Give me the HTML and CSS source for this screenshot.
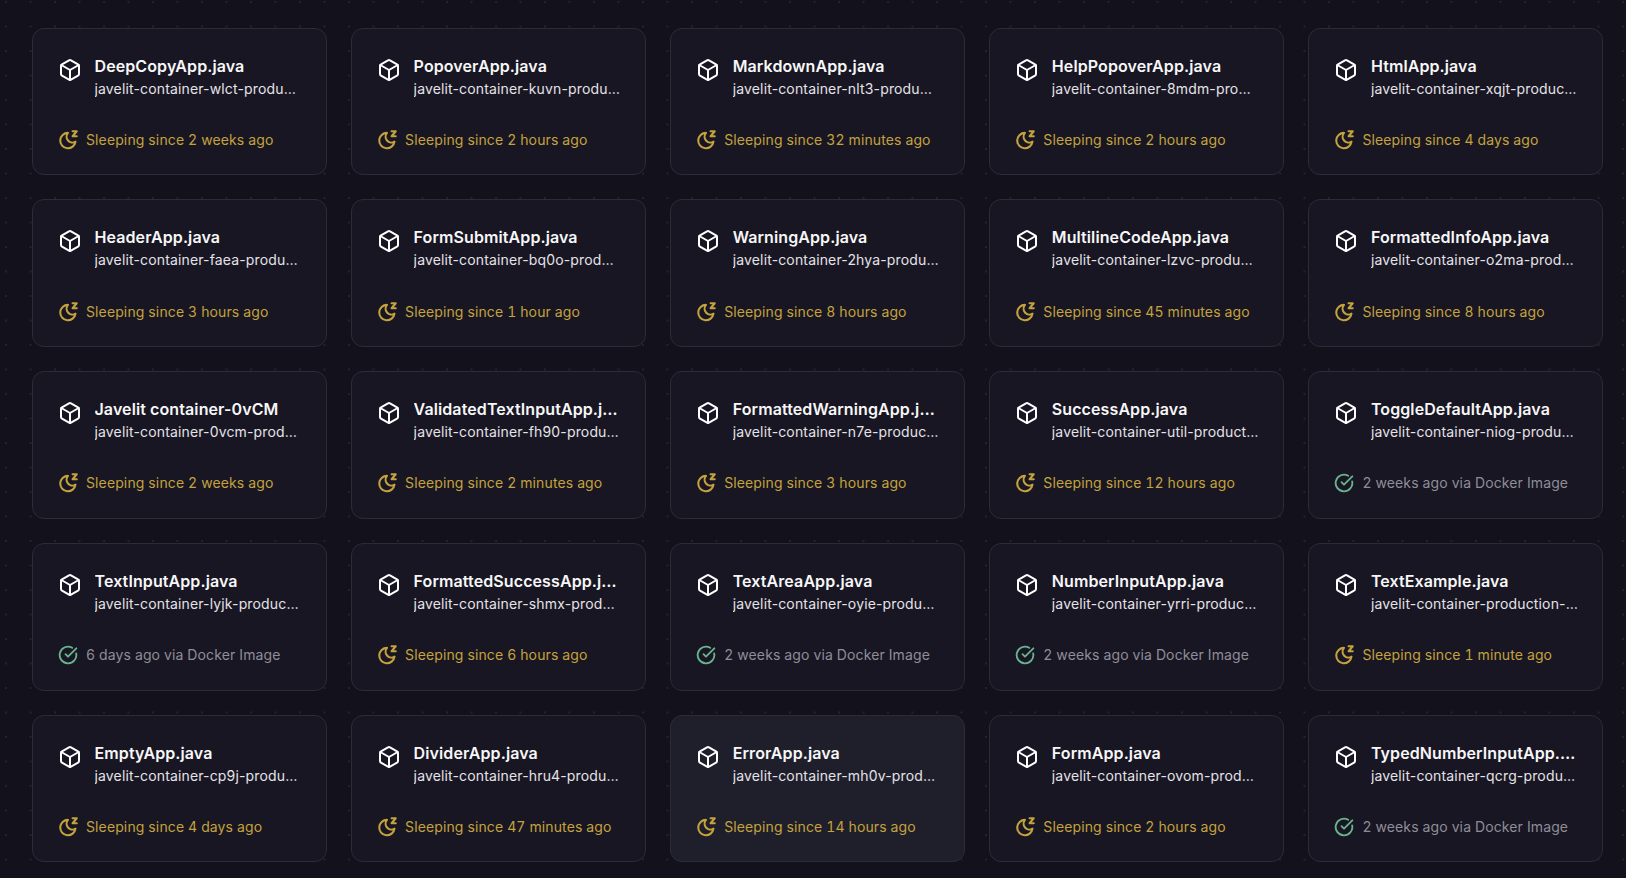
FILE: index.html
```html
<html>
  <head>
    <title>Javelit containers</title>
    <meta name="viewport" content="width=device-width, initial-scale=1.0" />
    <link rel="stylesheet" href="styles.css">
  </head>
  <body>
    <svg class="defs" width="0" height="0">
      <symbol id="box" viewBox="0 0 24 24">
        <path d="M21 8a2 2 0 0 0-1-1.73l-7-4a2 2 0 0 0-2 0l-7 4A2 2 0 0 0 3 8v8a2 2 0 0 0 1 1.73l7 4a2 2 0 0 0 2 0l7-4A2 2 0 0 0 21 16Z" />
        <path d="m3.3 7 8.7 5 8.7-5" />
        <path d="M12 22V12" />
      </symbol>
      <symbol id="moon" viewBox="0 0 24 24">
        <path d="M12 3.5A9.2 9.2 0 1 0 21 14A7 7 0 0 1 12 3.5Z" />
        <path d="M17.5 1.5h5l-5 6h5" />
      </symbol>
      <symbol id="check" viewBox="0 0 24 24">
        <path d="M21.8 10A10 10 0 1 1 17 3.34" />
        <path d="m9 11 3 3L22 4" />
      </symbol>
    </svg>
    <div class="grid">
      <div class="card">
        <div class="head"><svg class="icon-box"><use href="#box" /></svg><div class="names"><div class="name">DeepCopyApp.java</div><div class="host">javelit-container-wlct-production.up.railway.app</div></div></div>
        <div class="status sleeping"><svg class="icon-status"><use href="#moon" /></svg><span>Sleeping since 2 weeks ago</span></div>
      </div>
      <div class="card">
        <div class="head"><svg class="icon-box"><use href="#box" /></svg><div class="names"><div class="name">PopoverApp.java</div><div class="host">javelit-container-kuvn-production.up.railway.app</div></div></div>
        <div class="status sleeping"><svg class="icon-status"><use href="#moon" /></svg><span>Sleeping since 2 hours ago</span></div>
      </div>
      <div class="card">
        <div class="head"><svg class="icon-box"><use href="#box" /></svg><div class="names"><div class="name">MarkdownApp.java</div><div class="host">javelit-container-nlt3-production.up.railway.app</div></div></div>
        <div class="status sleeping"><svg class="icon-status"><use href="#moon" /></svg><span>Sleeping since 32 minutes ago</span></div>
      </div>
      <div class="card">
        <div class="head"><svg class="icon-box"><use href="#box" /></svg><div class="names"><div class="name">HelpPopoverApp.java</div><div class="host">javelit-container-8mdm-production.up.railway.app</div></div></div>
        <div class="status sleeping"><svg class="icon-status"><use href="#moon" /></svg><span>Sleeping since 2 hours ago</span></div>
      </div>
      <div class="card">
        <div class="head"><svg class="icon-box"><use href="#box" /></svg><div class="names"><div class="name">HtmlApp.java</div><div class="host">javelit-container-xqjt-production.up.railway.app</div></div></div>
        <div class="status sleeping"><svg class="icon-status"><use href="#moon" /></svg><span>Sleeping since 4 days ago</span></div>
      </div>

      <div class="card">
        <div class="head"><svg class="icon-box"><use href="#box" /></svg><div class="names"><div class="name">HeaderApp.java</div><div class="host">javelit-container-faea-production.up.railway.app</div></div></div>
        <div class="status sleeping"><svg class="icon-status"><use href="#moon" /></svg><span>Sleeping since 3 hours ago</span></div>
      </div>
      <div class="card">
        <div class="head"><svg class="icon-box"><use href="#box" /></svg><div class="names"><div class="name">FormSubmitApp.java</div><div class="host">javelit-container-bq0o-production.up.railway.app</div></div></div>
        <div class="status sleeping"><svg class="icon-status"><use href="#moon" /></svg><span>Sleeping since 1 hour ago</span></div>
      </div>
      <div class="card">
        <div class="head"><svg class="icon-box"><use href="#box" /></svg><div class="names"><div class="name">WarningApp.java</div><div class="host">javelit-container-2hya-production.up.railway.app</div></div></div>
        <div class="status sleeping"><svg class="icon-status"><use href="#moon" /></svg><span>Sleeping since 8 hours ago</span></div>
      </div>
      <div class="card">
        <div class="head"><svg class="icon-box"><use href="#box" /></svg><div class="names"><div class="name">MultilineCodeApp.java</div><div class="host">javelit-container-lzvc-production.up.railway.app</div></div></div>
        <div class="status sleeping"><svg class="icon-status"><use href="#moon" /></svg><span>Sleeping since 45 minutes ago</span></div>
      </div>
      <div class="card">
        <div class="head"><svg class="icon-box"><use href="#box" /></svg><div class="names"><div class="name">FormattedInfoApp.java</div><div class="host">javelit-container-o2ma-production.up.railway.app</div></div></div>
        <div class="status sleeping"><svg class="icon-status"><use href="#moon" /></svg><span>Sleeping since 8 hours ago</span></div>
      </div>

      <div class="card">
        <div class="head"><svg class="icon-box"><use href="#box" /></svg><div class="names"><div class="name">Javelit container-0vCM</div><div class="host">javelit-container-0vcm-production.up.railway.app</div></div></div>
        <div class="status sleeping"><svg class="icon-status"><use href="#moon" /></svg><span>Sleeping since 2 weeks ago</span></div>
      </div>
      <div class="card">
        <div class="head"><svg class="icon-box"><use href="#box" /></svg><div class="names"><div class="name">ValidatedTextInputApp.java</div><div class="host">javelit-container-fh90-production.up.railway.app</div></div></div>
        <div class="status sleeping"><svg class="icon-status"><use href="#moon" /></svg><span>Sleeping since 2 minutes ago</span></div>
      </div>
      <div class="card">
        <div class="head"><svg class="icon-box"><use href="#box" /></svg><div class="names"><div class="name">FormattedWarningApp.java</div><div class="host">javelit-container-n7e-production.up.railway.app</div></div></div>
        <div class="status sleeping"><svg class="icon-status"><use href="#moon" /></svg><span>Sleeping since 3 hours ago</span></div>
      </div>
      <div class="card">
        <div class="head"><svg class="icon-box"><use href="#box" /></svg><div class="names"><div class="name">SuccessApp.java</div><div class="host">javelit-container-util-production.up.railway.app</div></div></div>
        <div class="status sleeping"><svg class="icon-status"><use href="#moon" /></svg><span>Sleeping since 12 hours ago</span></div>
      </div>
      <div class="card">
        <div class="head"><svg class="icon-box"><use href="#box" /></svg><div class="names"><div class="name">ToggleDefaultApp.java</div><div class="host">javelit-container-niog-production.up.railway.app</div></div></div>
        <div class="status deployed"><svg class="icon-status"><use href="#check" /></svg><span>2 weeks ago via Docker Image</span></div>
      </div>

      <div class="card">
        <div class="head"><svg class="icon-box"><use href="#box" /></svg><div class="names"><div class="name">TextInputApp.java</div><div class="host">javelit-container-lyjk-production.up.railway.app</div></div></div>
        <div class="status deployed"><svg class="icon-status"><use href="#check" /></svg><span>6 days ago via Docker Image</span></div>
      </div>
      <div class="card">
        <div class="head"><svg class="icon-box"><use href="#box" /></svg><div class="names"><div class="name">FormattedSuccessApp.java</div><div class="host">javelit-container-shmx-production.up.railway.app</div></div></div>
        <div class="status sleeping"><svg class="icon-status"><use href="#moon" /></svg><span>Sleeping since 6 hours ago</span></div>
      </div>
      <div class="card">
        <div class="head"><svg class="icon-box"><use href="#box" /></svg><div class="names"><div class="name">TextAreaApp.java</div><div class="host">javelit-container-oyie-production.up.railway.app</div></div></div>
        <div class="status deployed"><svg class="icon-status"><use href="#check" /></svg><span>2 weeks ago via Docker Image</span></div>
      </div>
      <div class="card">
        <div class="head"><svg class="icon-box"><use href="#box" /></svg><div class="names"><div class="name">NumberInputApp.java</div><div class="host">javelit-container-yrri-production.up.railway.app</div></div></div>
        <div class="status deployed"><svg class="icon-status"><use href="#check" /></svg><span>2 weeks ago via Docker Image</span></div>
      </div>
      <div class="card">
        <div class="head"><svg class="icon-box"><use href="#box" /></svg><div class="names"><div class="name">TextExample.java</div><div class="host">javelit-container-production-1a2b.up.railway.app</div></div></div>
        <div class="status sleeping"><svg class="icon-status"><use href="#moon" /></svg><span>Sleeping since 1 minute ago</span></div>
      </div>

      <div class="card">
        <div class="head"><svg class="icon-box"><use href="#box" /></svg><div class="names"><div class="name">EmptyApp.java</div><div class="host">javelit-container-cp9j-production.up.railway.app</div></div></div>
        <div class="status sleeping"><svg class="icon-status"><use href="#moon" /></svg><span>Sleeping since 4 days ago</span></div>
      </div>
      <div class="card">
        <div class="head"><svg class="icon-box"><use href="#box" /></svg><div class="names"><div class="name">DividerApp.java</div><div class="host">javelit-container-hru4-production.up.railway.app</div></div></div>
        <div class="status sleeping"><svg class="icon-status"><use href="#moon" /></svg><span>Sleeping since 47 minutes ago</span></div>
      </div>
      <div class="card hover">
        <div class="head"><svg class="icon-box"><use href="#box" /></svg><div class="names"><div class="name">ErrorApp.java</div><div class="host">javelit-container-mh0v-production.up.railway.app</div></div></div>
        <div class="status sleeping"><svg class="icon-status"><use href="#moon" /></svg><span>Sleeping since 14 hours ago</span></div>
      </div>
      <div class="card">
        <div class="head"><svg class="icon-box"><use href="#box" /></svg><div class="names"><div class="name">FormApp.java</div><div class="host">javelit-container-ovom-production.up.railway.app</div></div></div>
        <div class="status sleeping"><svg class="icon-status"><use href="#moon" /></svg><span>Sleeping since 2 hours ago</span></div>
      </div>
      <div class="card">
        <div class="head"><svg class="icon-box"><use href="#box" /></svg><div class="names"><div class="name">TypedNumberInputApp.java</div><div class="host">javelit-container-qcrg-production.up.railway.app</div></div></div>
        <div class="status deployed"><svg class="icon-status"><use href="#check" /></svg><span>2 weeks ago via Docker Image</span></div>
      </div>
    </div>
  </body>
</html>
```

FILE: styles.css
```css
* {
  box-sizing: border-box;
}
html,
body {
  height: 100%;
}
body {
  margin: 0;
  overflow: hidden;
  background-color: #13111c;
  background-image: radial-gradient(circle at 1px 1px, #2a2833 0.6px, transparent 1px);
  background-size: 24.5px 24.5px;
  background-position: 5px 1px;
  color: #fff;
  font-family: Inter, "Noto Sans", sans-serif;
}
.defs {
  position: absolute;
}
.grid {
  display: grid;
  grid-template-columns: repeat(5, minmax(0, 1fr));
  grid-auto-rows: 147.75px;
  gap: 24px 24.5px;
  padding: 27.6px 23px 0 32px;
}
.card {
  display: flex;
  flex-direction: column;
  justify-content: space-between;
  padding: 26px 24.2px 24.4px 25px;
  background: #181622;
  border: 1px solid #2d2b36;
  border-radius: 12px;
}
.card.hover {
  background: #1f1f2b;
}
.head {
  display: flex;
  gap: 12.5px;
}
.names {
  flex: 1;
  min-width: 0;
}
.name,
.host {
  overflow: hidden;
  white-space: nowrap;
  text-overflow: ellipsis;
}
.name {
  font-size: 16px;
  line-height: 22px;
  font-weight: 600;
  letter-spacing: 0.1px;
  color: #f7f7f8;
}
.host {
  font-size: 14px;
  line-height: 23px;
  letter-spacing: 0.15px;
  color: #e4e3e8;
}
.icon-box {
  flex: none;
  width: 24px;
  height: 24px;
  margin-top: 3px;
  fill: none;
  stroke: #fff;
  stroke-width: 2;
  stroke-linecap: round;
  stroke-linejoin: round;
}
.status {
  display: flex;
  align-items: center;
  gap: 8px;
  font-size: 14px;
  line-height: 20px;
  letter-spacing: 0.12px;
  font-variant-numeric: tabular-nums;
}
.icon-status {
  flex: none;
  width: 20px;
  height: 20px;
  fill: none;
  stroke: currentColor;
  stroke-width: 2.5;
  stroke-linecap: round;
  stroke-linejoin: round;
}
.sleeping {
  color: #c4a23e;
}
.deployed {
  color: #8f8d98;
}
.deployed .icon-status {
  color: #6ab38e;
  stroke-width: 2.2;
}
```
